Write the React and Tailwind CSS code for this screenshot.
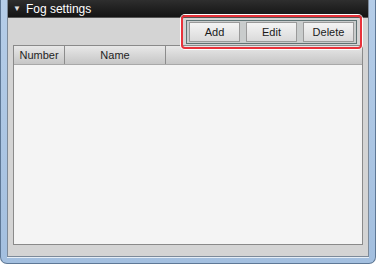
import React from "react";

const font = { fontFamily: '"Liberation Sans", Arial, sans-serif' };

function ToolButton({ label }) {
  return (
    <button className="h-[20px] w-[53px] border border-[#9a9a9a] bg-gradient-to-b from-[#f4f4f4] to-[#dadada] text-[11px] text-[#1a1a1a] leading-none">
      {label}
    </button>
  );
}

export default function App() {
  return (
    <div style={font} className="w-[376px] h-[264px] overflow-hidden bg-white">
      <div className="h-full bg-gradient-to-b from-[#b5cde8] to-[#a3bfdf] border-x border-b border-[#5e7896] rounded-b-[7px] px-[6px] pb-[6px] flex flex-col">
        <div className="flex-1 flex flex-col border-x border-b border-[#7d8a99] bg-[#d4d4d4] shadow-[0_1px_0_#e6eef7]">
          {/* Title */}
          <div className="h-[18px] flex items-center bg-gradient-to-b from-[#2e2e2e] to-[#141414] px-[5px] border-b border-[#555]">
            <span className="text-[8px] text-[#e0e0e0] mr-[5px] leading-none">▼</span>
            <span className="text-[12px] text-white leading-none">Fog settings</span>
          </div>

          {/* Toolbar */}
          <div className="h-[27px] relative">
            <div className="absolute left-[173px] top-[-3px] w-[181px] h-[34px] rounded-[4px] border-2 border-[#e8323a] shadow-[0_0_0_1px_#ffffff] p-[3px]">
              <div className="h-full flex items-center gap-[6px] px-[2px] bg-[#c9cccc] border border-[#5f7273]">
                <ToolButton label="Add" />
                <ToolButton label="Edit" />
                <ToolButton label="Delete" />
              </div>
            </div>
          </div>

          {/* List */}
          <div className="flex-1 ml-[5px] mr-[5px] mb-[11px] border border-[#8a8a8a] bg-[#f4f4f4] flex flex-col">
            <div className="h-[19px] flex bg-gradient-to-b from-[#e8e8e8] to-[#c6c6c6] border-b border-[#a8a8a8] text-[11px] text-[#1f1f1f]">
              <div className="w-[51px] flex items-center justify-center border-r border-[#8c8c8c]">Number</div>
              <div className="w-[101px] flex items-center justify-center border-r border-[#8c8c8c]">Name</div>
              <div className="flex-1" />
            </div>
            <div className="flex-1" />
          </div>
        </div>
      </div>
    </div>
  );
}
